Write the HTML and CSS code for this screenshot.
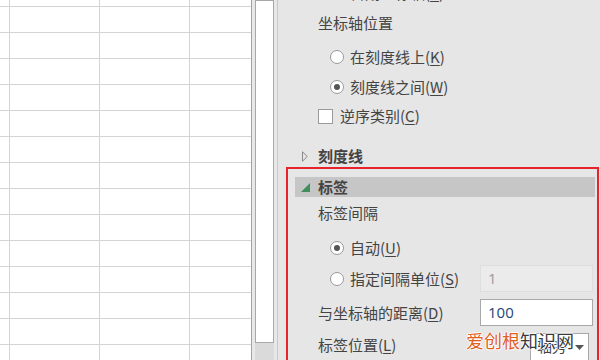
FILE: index.html
```html
<!DOCTYPE html>
<html lang="zh-CN">
<head>
<meta charset="utf-8">
<link rel="stylesheet" href="styles.css">
</head>
<body>
<div class="app">
  <div class="sheet"></div>
  <div class="scroll">
    <div class="sb-edge"></div>
    <div class="sb-pad"></div>
    <div class="sb-track"><div class="sb-thumb"></div></div>
    <div class="sb-pad"></div>
    <div class="sb-line"></div>
  </div>
  <div class="panel">
    <div class="content">
      <div class="row sub r-a"><span class="radio"></span><span>日期坐标轴(<u>E</u>)</span></div>
      <div class="row r-b">坐标轴位置</div>
      <div class="row sub r-c"><span class="radio"></span><span>在刻度线上(<u>K</u>)</span></div>
      <div class="row sub r-d"><span class="radio on"></span><span>刻度线之间(<u>W</u>)</span></div>
      <div class="row r-e"><span class="check"></span><span>逆序类别(<u>C</u>)</span></div>
      <div class="row r-f bold"><svg class="tri" width="6" height="11" viewBox="0 0 6 11"><path d="M0.5 0.8 L5.3 5.5 L0.5 10.2 Z" fill="none" stroke="#8a8a8a" stroke-width="1"/></svg>刻度线</div>
      <div class="group">
        <div class="bar bold"><svg class="gtri" width="10" height="10" viewBox="0 0 10 10"><path d="M10 0 L10 9 L1 9 Z" fill="#3f8f5c"/></svg>标签</div>
        <div class="grow r-g">标签间隔</div>
        <div class="grow sub r-h"><span class="radio on"></span><span>自动(<u>U</u>)</span></div>
        <div class="grow sub r-i"><span class="radio"></span><span class="lbl">指定间隔单位(<u>S</u>)</span><span class="input dis">1</span></div>
        <div class="grow r-j"><span class="lbl">与坐标轴的距离(<u>D</u>)</span><span class="input val">100</span></div>
        <div class="grow r-k"><span class="lbl">标签位置(<u>L</u>)</span><span class="select"><span>轴旁</span><svg class="arr" width="9" height="5" viewBox="0 0 9 5"><path d="M0 0 L9 0 L4.5 5 Z" fill="#555"/></svg></span></div>
      </div>
    </div>
    <div class="watermark"><span class="wm-o">爱创根</span><span class="wm-d">知识网</span></div>
  </div>
</div>
</body>
</html>
```
FILE: styles.css
```css
html, body {
  margin: 0;
  padding: 0;
}
body {
  width: 600px;
  height: 360px;
  overflow: hidden;
  font-family: "Noto Sans CJK SC", "Noto Sans", sans-serif;
}
.app {
  display: flex;
  height: 360px;
}
.sheet {
  width: 251px;
  flex: none;
  background-color: #fff;
  background-image:
    linear-gradient(to bottom, transparent 25px, #d4d4d4 25px),
    linear-gradient(to right, transparent 89px, #d4d4d4 89px);
  background-size: 100% 26px, 90px 100%;
  background-position: 0 7px, 10px 0;
}
.scroll {
  width: 27px;
  flex: none;
  display: flex;
}
.sb-edge { width: 1px; background: #a3a3a3; }
.sb-pad { width: 3px; background: #e8e8e8; }
.sb-line { width: 1px; background: #c9c9c9; }
.sb-track {
  width: 19px;
  background: #dadada;
}
.sb-thumb {
  height: 343px;
  box-sizing: border-box;
  background: #fff;
  border: 1px solid #a8a8a8;
}
.panel {
  flex: 1;
  background: #e6e6e6;
  position: relative;
  overflow: hidden;
  color: #444;
  font-size: 15px;
}
.content {
  margin-top: -17px;
}
.row, .grow {
  height: 20px;
  line-height: 20px;
  display: flex;
  align-items: center;
  white-space: nowrap;
}
.row { padding-left: 40px; }
.row.sub { padding-left: 52px; }
.grow { padding-left: 30px; }
.grow.sub { padding-left: 42px; }
u { text-decoration-thickness: 1px; text-underline-offset: 2px; }
.bold { font-weight: bold; }

.r-b { margin-top: 10px; }
.r-c { margin-top: 14px; }
.r-d { margin-top: 10px; }
.r-e { margin-top: 9px; }
.r-f { margin-top: 20px; }

.radio {
  width: 14px;
  height: 14px;
  box-sizing: border-box;
  border: 1px solid #9a9a9a;
  border-radius: 50%;
  background: #fff;
  margin-right: 6px;
  display: flex;
  align-items: center;
  justify-content: center;
  flex: none;
}
.radio.on::after {
  content: "";
  width: 6px;
  height: 6px;
  border-radius: 50%;
  background: #555;
}
.check {
  width: 15px;
  height: 15px;
  box-sizing: border-box;
  border: 1px solid #9a9a9a;
  background: #fff;
  margin-right: 7px;
  flex: none;
}
.tri {
  margin-left: -16px;
  margin-right: 10px;
}
.group {
  margin-top: 1px;
  margin-left: 8px;
  width: 313px;
  height: 220px;
  border: 2px solid #e8232b;
  border-bottom: none;
  box-sizing: border-box;
  padding-top: 8px;
}
.bar {
  height: 20px;
  margin-left: 7px;
  margin-right: 2px;
  background: #c6c6c6;
  display: flex;
  align-items: center;
  padding-left: 5px;
  line-height: 20px;
}
.gtri {
  margin-right: 8px;
  margin-top: 1px;
}
.r-g { margin-top: 6px; }
.r-h { margin-top: 15px; }
.r-i { margin-top: 7px; height: 27px; }
.r-j { margin-top: 7px; height: 27px; }
.r-k { margin-top: 7px; height: 27px; align-items: flex-start; }
.r-k .lbl { line-height: 24px; }
.lbl { flex: 1; }
.input {
  width: 113px;
  height: 27px;
  box-sizing: border-box;
  margin-right: 4px;
  padding-left: 7px;
  line-height: 25px;
  font-family: "Open Sans", "Noto Sans", sans-serif;
  font-size: 15px;
}
.input.dis {
  background: #ebebeb;
  border: 1px solid #dedede;
  color: #9a9a9a;
}
.input.val {
  background: #fff;
  border: 1px solid #a8a8a8;
  color: #22467a;
}
.select {
  width: 59px;
  height: 30px;
  box-sizing: border-box;
  margin-right: 8px;
  background: #fff;
  border: 1px solid #a8a8a8;
  border-bottom: none;
  display: flex;
  align-items: flex-start;
  justify-content: space-between;
  padding: 2px 4px 0 6px;
  line-height: 20px;
}
.arr { margin-top: 9px; }
.watermark {
  position: absolute;
  left: 188px;
  top: 329px;
  font-size: 18px;
  line-height: 22px;
  white-space: nowrap;
  text-shadow: 1px 0 #fff, -1px 0 #fff, 0 1px #fff, 0 -1px #fff;
}
.wm-o { color: #e2601f; }
.wm-d { color: #3a3a3a; }
```
